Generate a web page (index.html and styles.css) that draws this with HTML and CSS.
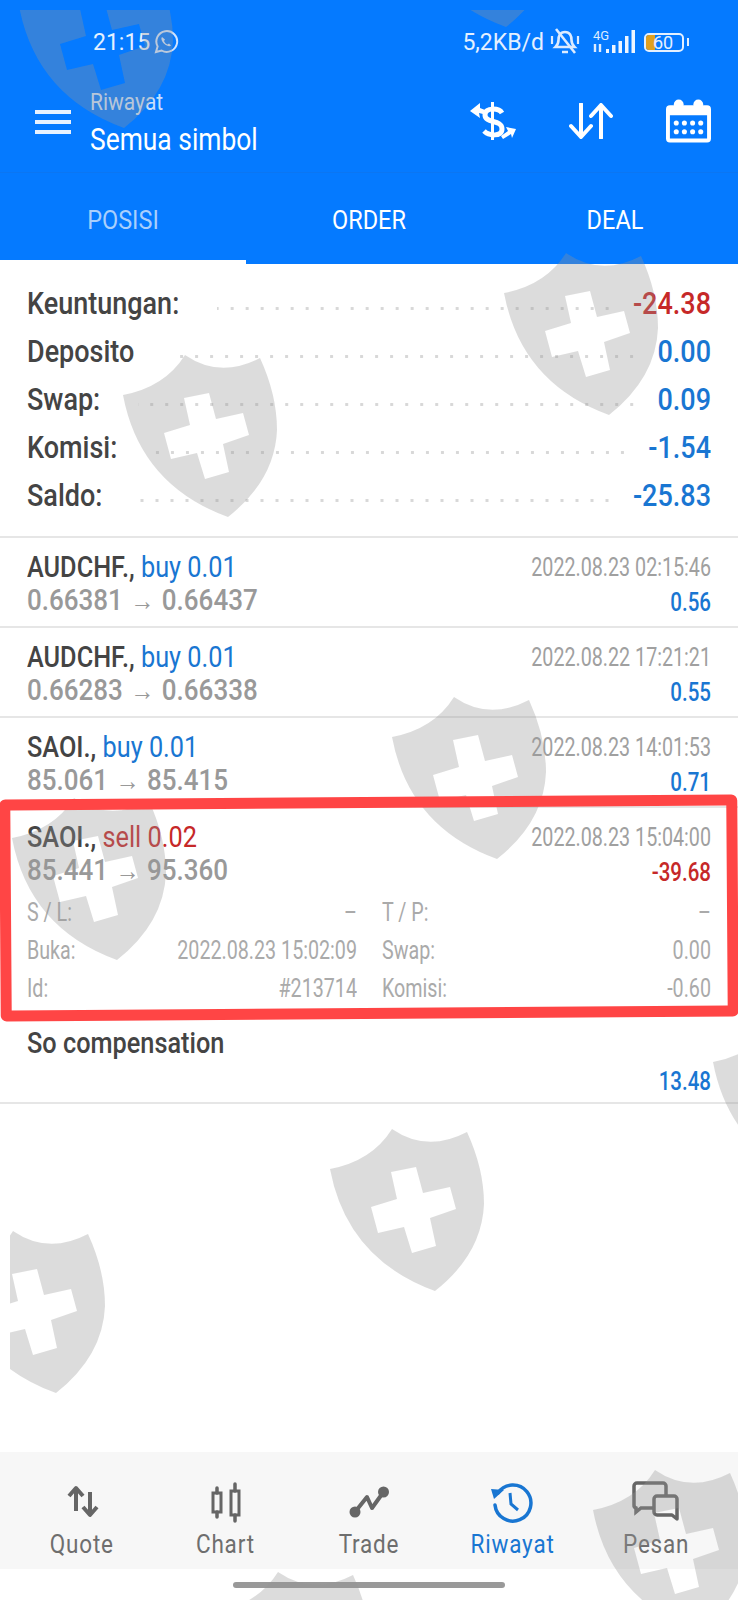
FILE: index.html
```html
<!DOCTYPE html>
<html>
<head>
<meta charset="utf-8">
<title>Riwayat</title>
<link rel="stylesheet" href="styles.css">
</head>
<body>
<div class="phone">

<header class="top">
	<div class="status">
		<span class="clock">21:15</span>
		<svg class="ic-wa" width="26" height="26" viewBox="0 0 26 26"><path d="M3 23l1.600-5.600A10.400 10.400 0 1 1 8.600 21.500z" fill="none" stroke="#cfe3ff" stroke-width="2"/><path d="M9 8c-1.500 1.500 0 5 2.500 7s5 3 6.500 1.500l-2-2-1.500 1c-1.500-.5-3-2-3.500-3.500l1-1.500z" fill="#cfe3ff"/></svg>
		<span class="status-right">
			<span class="speed">5,2KB/d</span>
			<svg class="ic-bell" width="30" height="28" viewBox="0 0 30 28"><path d="M15 4c-5 0-6.500 4-6.500 8 0 4-2 6-3 7h19c-1-1-3-3-3-7 0-4-1.500-8-6.500-8zM12 24h6" fill="none" stroke="#dcebff" stroke-width="2.600"/><path d="M6 1l19 24" stroke="#dcebff" stroke-width="2.600"/><path d="M2 8v8M28 8v8" stroke="#dcebff" stroke-width="2.200"/></svg>
			<svg class="ic-signal" width="44" height="26" viewBox="0 0 44 26"><text x="1" y="11" font-family="Roboto" font-size="13" fill="#dcebff">4G</text><path d="M3 23v-8M8 15v8" stroke="#dcebff" stroke-width="2.400"/><path d="M14 24h3v-4h-3zM20 24h3.500v-8H20zM26.500 24H30V12h-3.500zM33 24h3.500V7H33zM39.500 24H43V1h-3.500z" fill="#eef5ff"/></svg>
			<span class="battery"><span class="battery-fill"></span><span class="battery-num">60</span></span>
			<span class="battery-cap"></span>
		</span>
	</div>
	<div class="appbar">
		<div class="burger"><i></i><i></i><i></i></div>
		<div class="titles">
			<div class="sub"><span class="t">Riwayat</span></div>
			<div class="main"><span class="t">Semua simbol</span></div>
		</div>
		<div class="actions">
			<svg width="46" height="38" viewBox="0 0 46 38"><path d="M22.500 0v38" stroke="#fff" stroke-width="3"/><path d="M32 11C29 6 15 5 15 13c0 9 17 4 17 14 0 8-13 7-18 2" fill="none" stroke="#fff" stroke-width="5"/><path d="M0 9l10-8v5l5 2-2 4-4-1 1 5z" fill="#fff"/><path d="M46 27l-10-2 2 4-7 5 2 3 8-5 1 4z" fill="#fff"/></svg>
			<svg width="44" height="36" viewBox="0 0 44 36"><path d="M12 1v32M2 23l10 11 10-11M32 35V3M22 13L32 2l10 11" fill="none" stroke="#fff" stroke-width="4" stroke-linecap="round" stroke-linejoin="round"/></svg>
			<svg width="45" height="44" viewBox="0 0 46 44"><path d="M4 8h38a2 2 0 0 1 2 2v30a2 2 0 0 1-2 2H4a2 2 0 0 1-2-2V10a2 2 0 0 1 2-2z" fill="none" stroke="#fff" stroke-width="4"/><path d="M2 8h42v8H2z" fill="#fff"/><circle cx="13" cy="5" r="5" fill="#fff"/><circle cx="33" cy="5" r="5" fill="#fff"/><g fill="#fff"><circle cx="10.500" cy="24" r="2.600"/><circle cx="18.800" cy="24" r="2.600"/><circle cx="27.200" cy="24" r="2.600"/><circle cx="35.500" cy="24" r="2.600"/><circle cx="10.500" cy="33" r="2.600"/><circle cx="18.800" cy="33" r="2.600"/><circle cx="27.200" cy="33" r="2.600"/><circle cx="35.500" cy="33" r="2.600"/></g></svg>
		</div>
	</div>
	<nav class="tabs">
		<div class="tab tab-on"><span class="t">POSISI</span></div>
		<div class="tab"><span class="t">ORDER</span></div>
		<div class="tab"><span class="t">DEAL</span></div>
	</nav>
</header>

<main class="content">
	<section class="summary">
		<div class="sum-row"><span class="t sum-label">Keuntungan:</span><span class="dots"></span><span class="t sum-val red">-24.38</span></div>
		<div class="sum-row"><span class="t sum-label">Deposito</span><span class="dots"></span><span class="t sum-val blue">0.00</span></div>
		<div class="sum-row"><span class="t sum-label">Swap:</span><span class="dots"></span><span class="t sum-val blue">0.09</span></div>
		<div class="sum-row"><span class="t sum-label">Komisi:</span><span class="dots"></span><span class="t sum-val blue">-1.54</span></div>
		<div class="sum-row"><span class="t sum-label">Saldo:</span><span class="dots"></span><span class="t sum-val blue">-25.83</span></div>
	</section>

	<div class="deal">
		<div class="line"><span class="t title">AUDCHF., <em class="blue">buy 0.01</em></span><span class="t date">2022.08.23 02:15:46</span></div>
		<div class="line"><span class="t price">0.66381 <small>→</small> 0.66437</span><span class="t amount blue">0.56</span></div>
	</div>
	<div class="deal">
		<div class="line"><span class="t title">AUDCHF., <em class="blue">buy 0.01</em></span><span class="t date">2022.08.22 17:21:21</span></div>
		<div class="line"><span class="t price">0.66283 <small>→</small> 0.66338</span><span class="t amount blue">0.55</span></div>
	</div>
	<div class="deal">
		<div class="line"><span class="t title">SAOI., <em class="blue">buy 0.01</em></span><span class="t date">2022.08.23 14:01:53</span></div>
		<div class="line"><span class="t price">85.061 <small>→</small> 85.415</span><span class="t amount blue">0.71</span></div>
	</div>
	<div class="deal deal-open">
		<div class="mark"></div>
		<div class="line"><span class="t title">SAOI., <em class="red">sell 0.02</em></span><span class="t date">2022.08.23 15:04:00</span></div>
		<div class="line"><span class="t price">85.441 <small>→</small> 95.360</span><span class="t amount red">-39.68</span></div>
		<div class="details">
			<div class="det"><span class="t">S / L:</span><span class="t">–</span></div>
			<div class="det"><span class="t">T / P:</span><span class="t">–</span></div>
			<div class="det"><span class="t">Buka:</span><span class="t">2022.08.23 15:02:09</span></div>
			<div class="det"><span class="t">Swap:</span><span class="t">0.00</span></div>
			<div class="det"><span class="t">Id:</span><span class="t">#213714</span></div>
			<div class="det"><span class="t">Komisi:</span><span class="t">-0.60</span></div>
		</div>
	</div>
	<div class="deal">
		<div class="line"><span class="t title">So compensation</span></div>
		<div class="line line-low"><span></span><span class="t amount blue">13.48</span></div>
	</div>
</main>

<nav class="bottom">
	<div class="item">
		<svg width="48" height="44" viewBox="0 0 48 44"><path d="M18 30V8M11 15l7-8 7 8M32 11v22M25 26l7 8 7-8" fill="none" stroke="#666" stroke-width="4" stroke-linejoin="round"/></svg>
		<span class="t">Quote</span>
	</div>
	<div class="item">
		<svg width="48" height="44" viewBox="0 0 48 44"><path d="M16 7v5M16 31v5M34 3v7M34 34v6" stroke="#666" stroke-width="3.500" stroke-linecap="round"/><path d="M12 12h8v19h-8zM30 10h8v24h-8z" fill="none" stroke="#666" stroke-width="3"/></svg>
		<span class="t">Chart</span>
	</div>
	<div class="item">
		<svg width="48" height="44" viewBox="0 0 48 44"><path d="M10 31L22 16l5 11L38.500 11" fill="none" stroke="#666" stroke-width="4" stroke-linejoin="round"/><circle cx="10" cy="31" r="5.500" fill="#666"/><circle cx="38.500" cy="11" r="5.500" fill="#666"/></svg>
		<span class="t">Trade</span>
	</div>
	<div class="item item-on">
		<svg width="48" height="44" viewBox="0 0 48 44"><path d="M9 12A18 18 0 1 1 6 24" fill="none" stroke="#1976d2" stroke-width="3.500" stroke-linecap="round"/><path d="M2 8l13 1-10 9z" fill="#1976d2"/><path d="M21 12l1 11 7 6" fill="none" stroke="#1976d2" stroke-width="3"/></svg>
		<span class="t">Riwayat</span>
	</div>
	<div class="item">
		<svg width="48" height="44" viewBox="0 0 48 44"><path d="M21 27H9l-5 4v-4a3 3 0 0 1-2-3V5a3 3 0 0 1 3-3h26a3 3 0 0 1 3 3v9" fill="none" stroke="#666" stroke-width="3.500"/><path d="M25 15h17a3 3 0 0 1 3 3v20l-5-4H25a3 3 0 0 1-3-3V18a3 3 0 0 1 3-3z" fill="none" stroke="#666" stroke-width="3.500" stroke-linejoin="round"/></svg>
		<span class="t">Pesan</span>
	</div>
</nav>
<div class="homebar"><span class="pill"></span></div>

<svg class="watermark" width="738" height="1600" viewBox="0 0 738 1600">
	<defs>
		<path id="shield" fill-rule="evenodd" d="M13 50Q55 42 75 10Q110 34 150 13Q167 50 167 85Q165 135 118 172Q30 140 13 50ZM74 53L99 48L106 74L133 68L139 90L113 99L119 127L95 134L87 108L61 114L54 88L80 80Z"/>
		<clipPath id="wmclip"><rect x="10" y="10" width="728" height="1590"/></clipPath>
	</defs>
	<g clip-path="url(#wmclip)">
		<use href="#shield" x="6" y="-44"/>
		<use href="#shield" x="388" y="-145"/>
		<use href="#shield" x="491" y="243"/>
		<use href="#shield" x="110" y="345"/>
		<use href="#shield" x="379" y="687"/>
		<use href="#shield" x="-1" y="788"/>
		<use href="#shield" x="700" y="1012"/>
		<use href="#shield" x="317" y="1119"/>
		<use href="#shield" x="-62" y="1221"/>
		<use href="#shield" x="580" y="1460"/>
		<use href="#shield" x="203" y="1562"/>
	</g>
</svg>

</div>
</body>
</html>
```

FILE: styles.css
```css
body {
	margin: 0;
	background-color: white;
	font-family: Roboto, "Liberation Sans", sans-serif;
}
.phone {
	position: relative;
	width: 738px;
	height: 1600px;
	overflow: hidden;
	display: flex;
	flex-direction: column;
}
/* the screenshot is stretched a bit in height */
.t {
	display: inline-block;
	line-height: 1;
	transform: scaleY(1.14);
}
.blue { color: #1976d2; }
.red { color: #c62828; }
em { font-style: normal; font-weight: 400; }

.top {
	background-color: #057aff;
	color: white;
	height: 264px;
	flex: none;
}
.status {
	height: 76px;
	padding: 8px 49px 0 93px;
	box-sizing: border-box;
	display: flex;
	align-items: center;
	font-size: 23px;
	color: #e4f0ff;
}
.ic-wa { margin-left: 3px; }
.status-right {
	margin-left: auto;
	display: flex;
	align-items: center;
}
.ic-bell { margin-left: 6px; }
.ic-signal { margin-left: 12px; }
.battery {
	position: relative;
	width: 40px;
	height: 19px;
	margin-left: 8px;
	box-sizing: border-box;
	border: 2px solid #e4f0ff;
	border-radius: 5px;
	overflow: hidden;
}
.battery-fill {
	display: block;
	width: 9px;
	height: 100%;
	background-color: #e0a020;
}
.battery-num {
	position: absolute;
	top: -2px;
	left: 7px;
	font-size: 18px;
	line-height: 19px;
}
.battery-cap {
	width: 2px;
	height: 8px;
	margin-left: 3px;
	background-color: #e4f0ff;
}

.appbar {
	height: 97px;
	box-sizing: border-box;
	border-bottom: 1px solid #0b76f2;
	display: flex;
	align-items: center;
	padding: 0 27px 0 35px;
}
.burger {
	width: 36px;
	margin-top: 1px;
}
.burger i {
	display: block;
	height: 4px;
	margin-bottom: 6px;
	background-color: #e8f2ff;
}
.titles {
	margin-left: 19px;
}
.sub {
	font-size: 21px;
	color: #c8dffb;
	line-height: 30px;
}
.main {
	font-size: 26.400px;
	line-height: 44px;
}
.main .t { transform: scaleY(1.2); }
.actions {
	margin-left: auto;
	display: flex;
	align-items: center;
	gap: 53px;
	margin-top: -6px;
}
.tabs {
	display: flex;
	height: 91px;
}
.tab {
	flex: 1;
	text-align: center;
	font-size: 23.500px;
	line-height: 95px;
}
.tab .t { transform: scaleY(1.1); }
.tab-on {
	color: #a9cffc;
	border-bottom: 4px solid white;
	height: 87px;
}

.content {
	flex: 1;
}
.summary {
	padding: 16px 27px 16px;
	border-bottom: 2px solid #e6e6e6;
}
.sum-row {
	display: flex;
	height: 48px;
	align-items: center;
	font-size: 27px;
	font-weight: 500;
}
.sum-label { color: #444; }
.dots {
	flex: 1;
	height: 3px;
	margin: 8px 18px 0 38px;
	background: radial-gradient(circle, #d8d8d8 1.400px, transparent 1.600px) right center / 15px 3px repeat-x;
}

.deal {
	position: relative;
	height: 90px;
	box-sizing: border-box;
	padding: 14px 27px 0;
	border-bottom: 2px solid #e6e6e6;
}
.deal-open {
	height: 206px;
	border-bottom: none;
}
.line {
	display: flex;
	justify-content: space-between;
	align-items: center;
	height: 32px;
}
.line-low { margin-top: 3px; }
.title {
	font-size: 25.300px;
	font-weight: 500;
	color: #444;
}
.price {
	font-size: 26px;
	font-weight: 500;
	color: #999;
}
.price small {
	font-size: 24px;
	font-weight: 400;
	margin: 0 1px;
}
.date {
	font-size: 19.700px;
	color: #a0a0a0;
	transform: scaleY(1.3);
}
.amount {
	font-size: 20.500px;
	font-weight: 500;
	margin-top: 4px;
	transform: scaleY(1.25);
}
.details {
	margin-top: 8px;
	display: grid;
	grid-template-columns: 330px 329px;
	column-gap: 25px;
	grid-auto-rows: 38px;
}
.det {
	display: flex;
	justify-content: space-between;
	align-items: center;
	font-size: 19.700px;
	color: #aaa;
}
.det .t { transform: scaleY(1.3); }
.mark {
	position: absolute;
	z-index: 3;
	top: -11px;
	left: 0;
	width: 738px;
	height: 222px;
	box-sizing: border-box;
	border: 11px solid #ff4545;
	border-radius: 6px;
	transform: rotate(-0.4deg);
}

.bottom {
	flex: none;
	height: 117px;
	box-sizing: border-box;
	padding: 29px 10px 0;
	background-color: #f7f7f7;
	display: flex;
}
.item {
	flex: 1;
	display: flex;
	flex-direction: column;
	align-items: center;
	font-size: 22.500px;
	letter-spacing: 0.800px;
	color: #6e6e6e;
}
.item svg { margin-bottom: 8px; }
.item-on { color: #1976d2; }
.homebar {
	flex: none;
	height: 31px;
	padding-top: 13px;
	box-sizing: border-box;
	text-align: center;
}
.pill {
	display: block;
	width: 272px;
	height: 6px;
	margin: 0 auto;
	border-radius: 3px;
	background-color: #999;
}

.watermark {
	position: absolute;
	z-index: 2;
	top: 0;
	left: 0;
	fill: rgba(150,150,150,0.33);
	pointer-events: none;
}
```
